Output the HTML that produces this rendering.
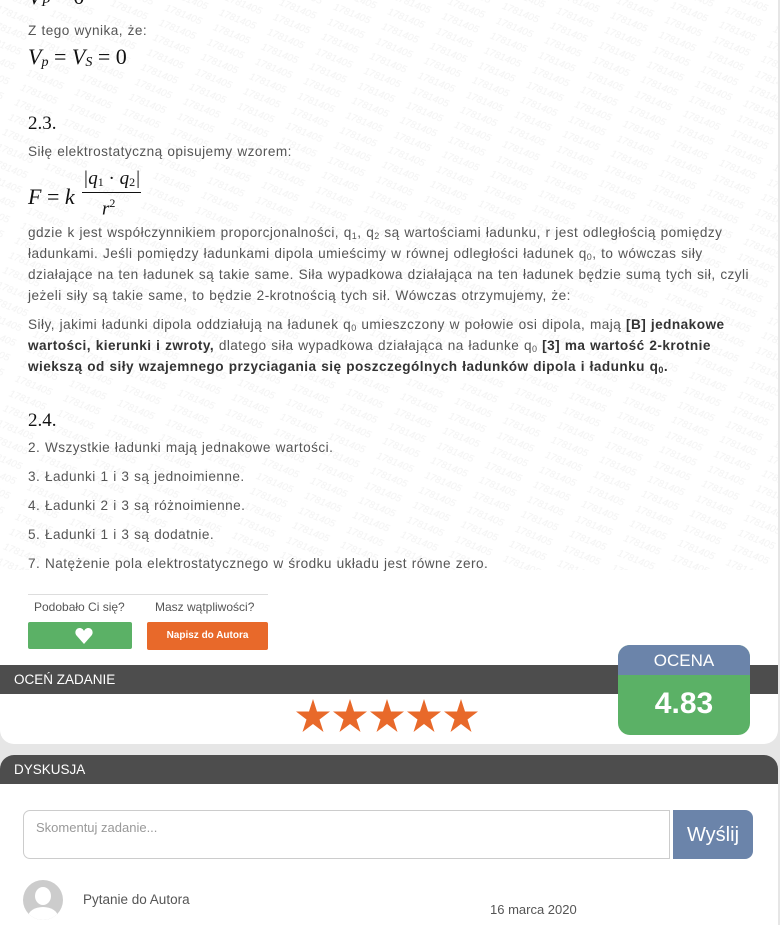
<!DOCTYPE html>
<html><head><meta charset="utf-8">
<style>
html,body{margin:0;padding:0;}
body{width:780px;height:915px;overflow:hidden;background:#e6e6e6;font-family:"Liberation Sans",sans-serif;color:#555;position:relative;}
.card1{position:absolute;left:0;top:-20px;width:778px;height:764px;background:#fff;border-radius:0 0 14px 14px;overflow:hidden;}
.wm{position:absolute;left:0;top:20px;width:778px;height:570px;}
.t{position:absolute;left:28px;font-size:13.6px;letter-spacing:0.45px;word-spacing:0.5px;line-height:21px;color:#555;white-space:nowrap;}
.math{position:absolute;left:28px;font-family:"Liberation Serif",serif;color:#111;font-style:italic;}
.h{position:absolute;left:28px;font-family:"Liberation Serif",serif;font-size:19px;color:#111;}
b{color:#333;}
sub{font-size:9px;vertical-align:-2px;line-height:0;}
.bar{position:absolute;left:0;width:778px;height:29px;background:#4d4d4d;color:#fff;font-size:13.5px;line-height:29px;padding-left:14px;box-sizing:border-box;}
.card2{position:absolute;left:0;top:755px;width:778px;height:170px;background:#fff;border-radius:14px 14px 0 0;overflow:hidden;}
.up{font-style:normal;}
</style></head><body>
<div class="card1">
<svg class="wm" xmlns="http://www.w3.org/2000/svg"><defs><pattern id="p" width="52" height="16" patternUnits="userSpaceOnUse" patternTransform="rotate(22)"><text x="0" y="12" font-family="Liberation Sans" font-style="italic" font-size="10" fill="#f3f3f3">1781405</text></pattern></defs><rect width="100%" height="100%" fill="url(#p)"/></svg>
<div style="position:absolute;left:0;top:20px;width:778px;height:915px;">
<div class="math" style="top:-16px;font-size:22px;">V<sub style="font-size:14px">P</sub> <span class="up">= 0</span></div>
<div class="t" style="top:20px;">Z tego wynika, że:</div>
<div class="math" style="top:44px;font-size:22px;">V<sub style="font-size:14px">p</sub> <span class="up">=</span> V<sub style="font-size:14px">S</sub> <span class="up">= 0</span></div>
<div class="h" style="top:113px;">2.3.</div>
<div class="t" style="top:141px;">Siłę elektrostatyczną opisujemy wzorem:</div>
<div class="math" style="top:168px;font-size:22px;height:50px;">
<span style="position:absolute;top:16px;white-space:nowrap;">F <span class="up">=</span> k</span>
<span style="position:absolute;left:54px;top:0;white-space:nowrap;font-size:19px;border-bottom:1px solid #111;padding:0 1px 2px;">|q<sub style="font-size:12px;font-style:normal">1</sub> <span class="up">·</span> q<sub style="font-size:12px;font-style:normal">2</sub>|</span>
<span style="position:absolute;left:74px;top:28px;font-size:19px;">r<sup style="font-size:12px;font-style:normal">2</sup></span>
</div>
<div class="t" style="top:222px;">gdzie k jest współczynnikiem proporcjonalności, q<sub>1</sub>, q<sub>2</sub> są wartościami ładunku, r jest odległością pomiędzy<br>ładunkami. Jeśli pomiędzy ładunkami dipola umieścimy w równej odległości ładunek q<sub>0</sub>, to wówczas siły<br>działające na ten ładunek są takie same. Siła wypadkowa działająca na ten ładunek będzie sumą tych sił, czyli<br>jeżeli siły są takie same, to będzie 2-krotnością tych sił. Wówczas otrzymujemy, że:</div>
<div class="t" style="top:314px;">Siły, jakimi ładunki dipola oddziałują na ładunek q<sub>0</sub> umieszczony w połowie osi dipola, mają <b>[B] jednakowe</b><br><b>wartości, kierunki i zwroty,</b> dlatego siła wypadkowa działająca na ładunke q<sub>0</sub> <b>[3] ma wartość 2-krotnie</b><br><b>wiekszą od siły wzajemnego przyciagania się poszczególnych ładunków dipola i ładunku q<sub>0</sub>.</b></div>
<div class="h" style="top:410px;">2.4.</div>
<div class="t" style="top:437px;">2. Wszystkie ładunki mają jednakowe wartości.</div>
<div class="t" style="top:466px;">3. Ładunki 1 i 3 są jednoimienne.</div>
<div class="t" style="top:495px;">4. Ładunki 2 i 3 są różnoimienne.</div>
<div class="t" style="top:524px;">5. Ładunki 1 i 3 są dodatnie.</div>
<div class="t" style="top:553px;">7. Natężenie pola elektrostatycznego w środku układu jest równe zero.</div>
<div style="position:absolute;left:28px;top:594px;width:240px;height:1px;background:#ddd;"></div>
<div style="position:absolute;left:34px;top:600px;font-size:12px;color:#555;">Podobało Ci się?</div>
<div style="position:absolute;left:155px;top:600px;font-size:12px;color:#555;">Masz wątpliwości?</div>
<div style="position:absolute;left:28px;top:622px;width:104px;height:27px;background:#5bb166;border-radius:2px;">
<svg width="18" height="16" viewBox="0 0 18 16" style="position:absolute;left:47px;top:6px;"><path d="M9 16 L1.5 7.5 C-1 4.5 1 0 4.6 0 C6.7 0 8.2 1.3 9 3 C9.8 1.3 11.3 0 13.4 0 C17 0 19 4.5 16.5 7.5 Z" fill="#fff"/></svg></div>
<div style="position:absolute;left:147px;top:622px;width:121px;height:28px;background:#e8692a;border-radius:2px;color:#fff;font-size:10px;font-weight:bold;text-align:center;line-height:28px;">Napisz do Autora</div>
<div class="bar" style="top:665px;">OCEŃ ZADANIE</div>
<svg style="position:absolute;left:296px;top:699px;" width="186" height="34" viewBox="0 0 186 34">
<defs><path id="s" d="M17 0 L21 12.5 L34 12.5 L23.5 20.5 L27.5 33 L17 25 L6.5 33 L10.5 20.5 L0 12.5 L13 12.5 Z" fill="#e8692a"/></defs>
<use href="#s" x="0"/><use href="#s" x="37"/><use href="#s" x="74"/><use href="#s" x="111"/><use href="#s" x="148"/>
</svg>
<div style="position:absolute;left:618px;top:645px;width:132px;height:90px;border-radius:12px;overflow:hidden;background:#5bb166;">
<div style="height:30px;background:#6b84aa;color:#fff;font-size:17px;text-align:center;line-height:32px;">OCENA</div>
<div style="color:#fff;font-size:30px;font-weight:bold;text-align:center;line-height:58px;">4.83</div>
</div>
</div>
</div>
<div class="card2">
<div class="bar" style="top:0;">DYSKUSJA</div>
<div style="position:absolute;left:23px;top:55px;width:647px;height:49px;border:1px solid #ccc;border-radius:7px 0 0 7px;box-sizing:border-box;"><span style="position:absolute;left:12px;top:9px;font-size:13px;color:#999;">Skomentuj zadanie...</span></div>
<div style="position:absolute;left:673px;top:55px;width:80px;height:49px;background:#6b84aa;border-radius:0 8px 8px 0;color:#fff;font-size:20px;text-align:center;line-height:50px;">Wyślij</div>
<div style="position:absolute;left:23px;top:125px;width:40px;height:40px;border-radius:50%;background:#ccc;overflow:hidden;"><div style="position:absolute;left:12px;top:7px;width:16px;height:18px;border-radius:50%;background:#fff;"></div><div style="position:absolute;left:5px;top:27px;width:30px;height:20px;border-radius:50%;background:#fff;"></div></div>
<div style="position:absolute;left:83px;top:137px;font-size:13.5px;color:#555;">Pytanie do Autora</div>
<div style="position:absolute;left:490px;top:147px;font-size:13px;color:#555;">16 marca 2020</div>
</div>
</body></html>
